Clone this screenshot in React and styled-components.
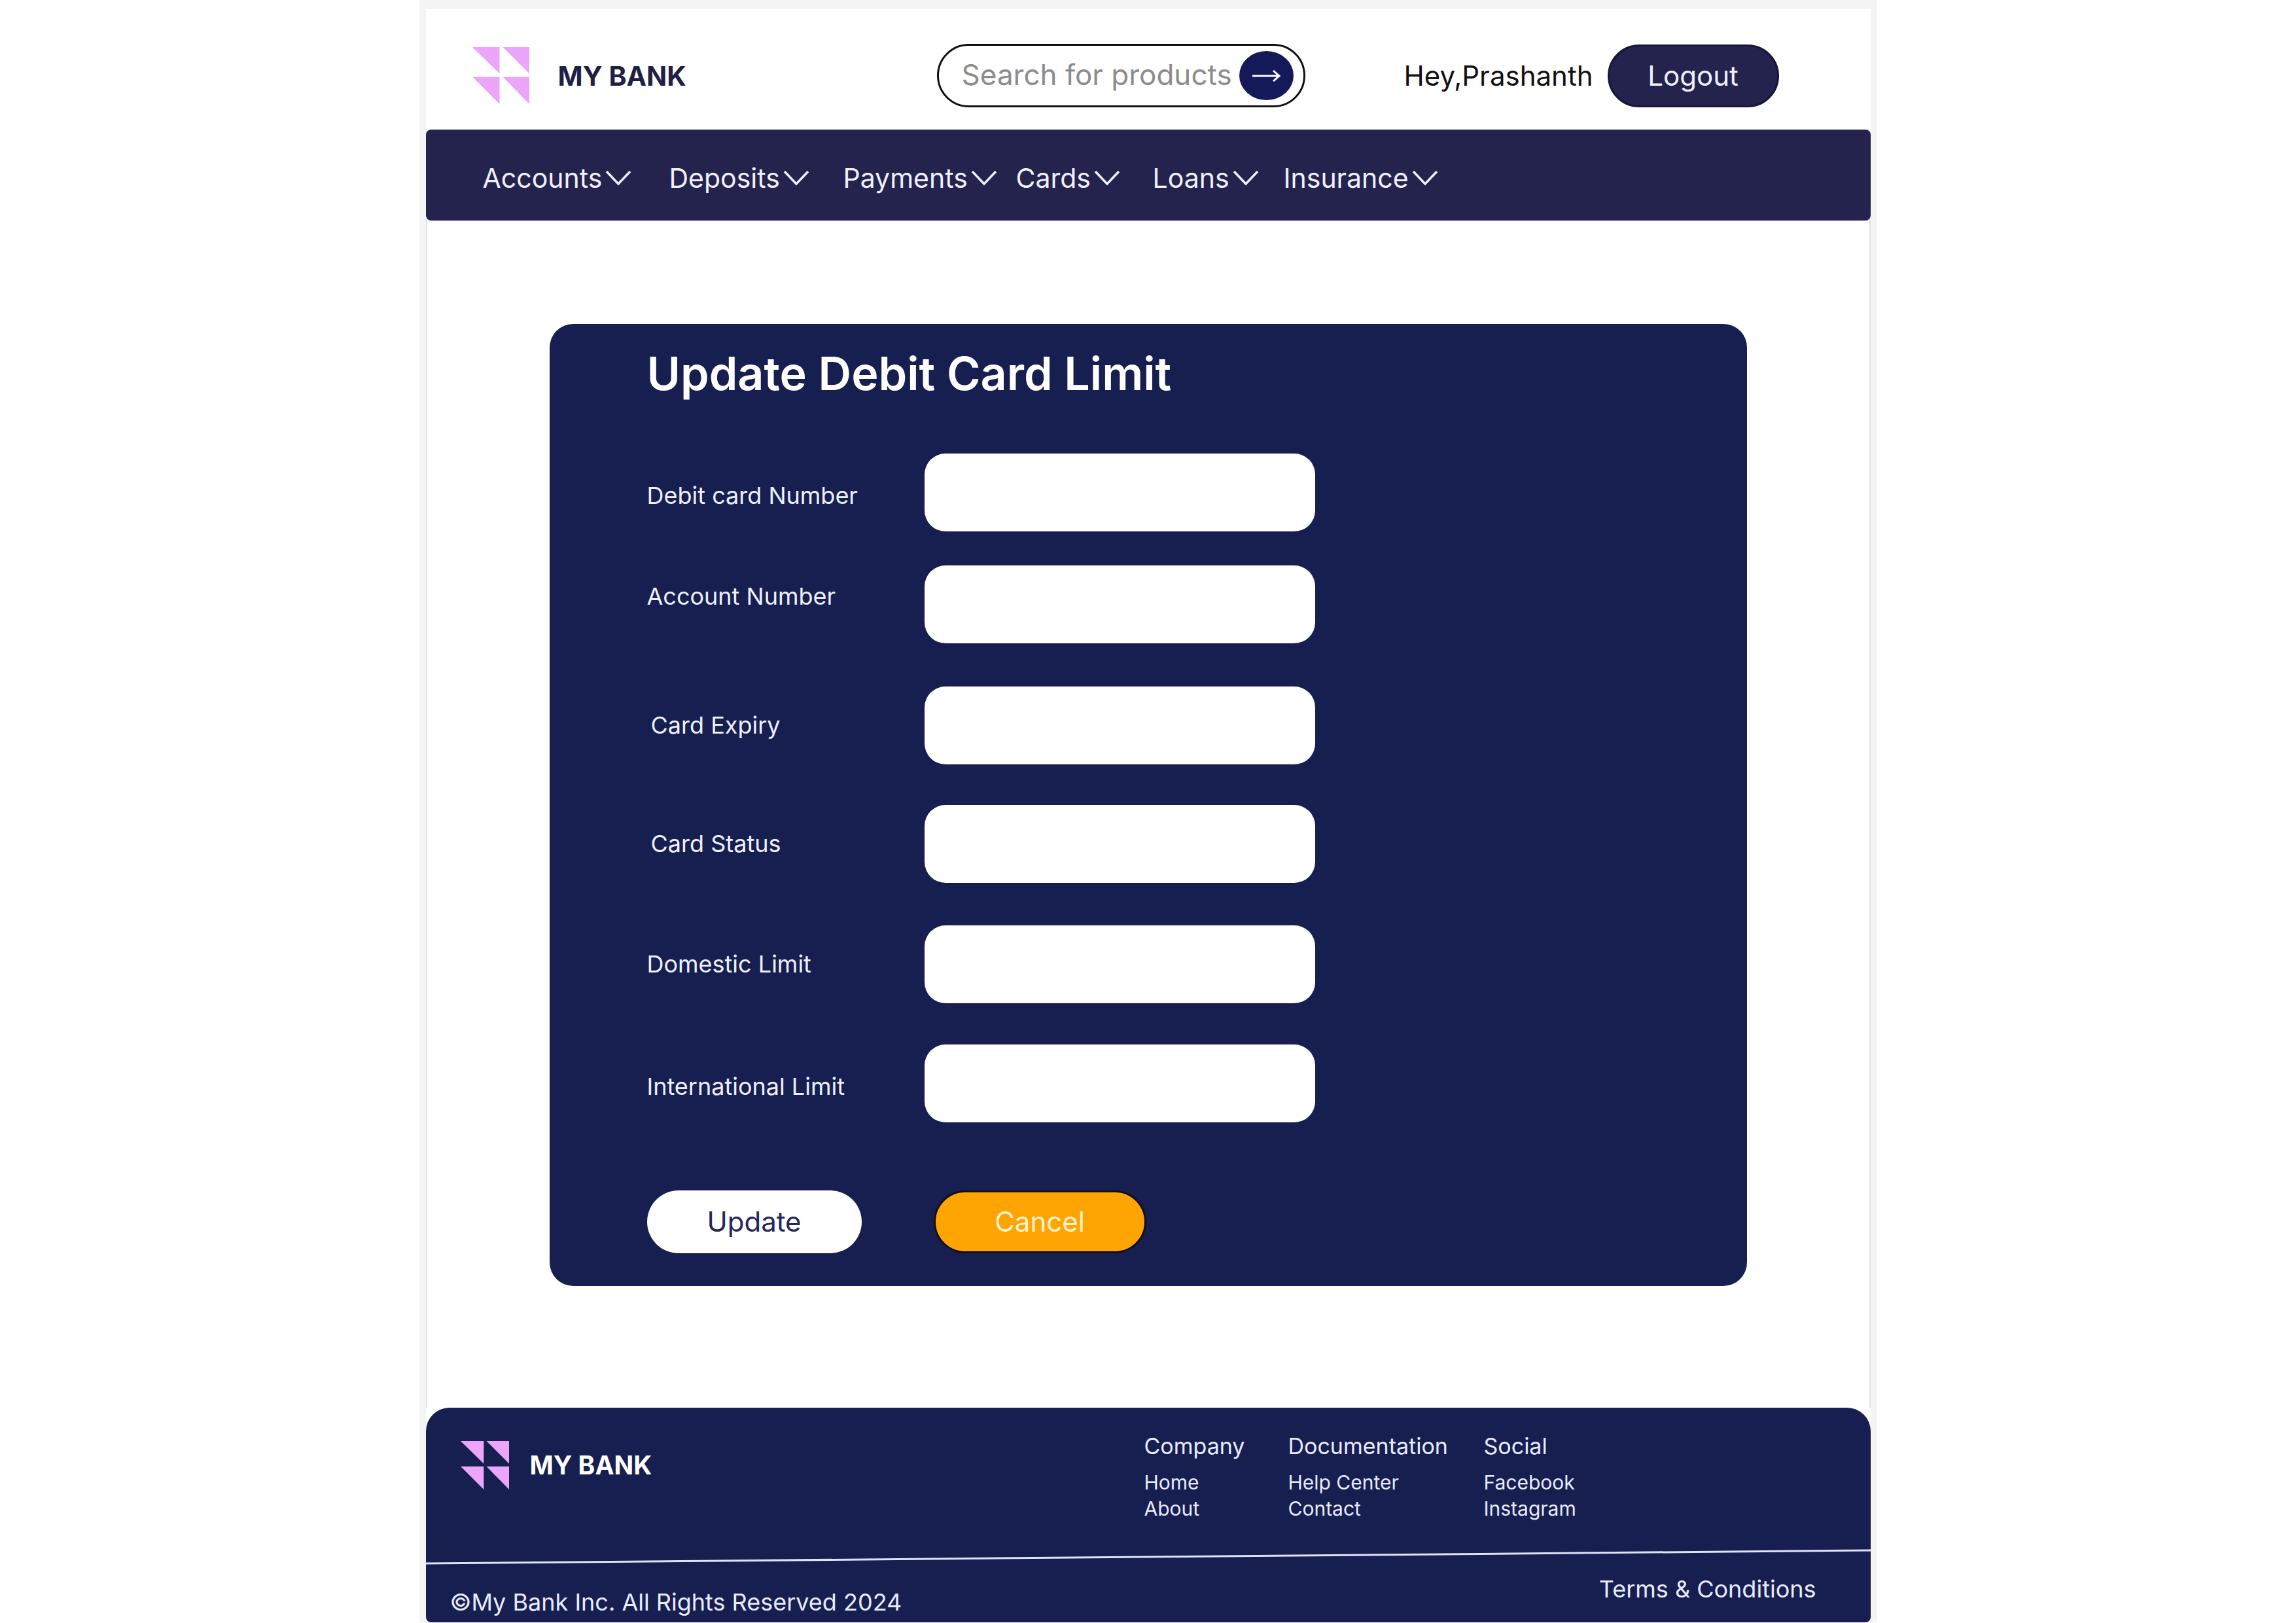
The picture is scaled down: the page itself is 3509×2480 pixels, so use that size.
import React from "react";
import styled, { createGlobalStyle } from "styled-components";

const navy = "#171f50";
const ink = "#24234d";
const pink = "#eba6fa";

const GlobalStyle = createGlobalStyle`
  *, *::before, *::after { box-sizing: border-box; }
  body {
    margin: 0;
    background: #fff;
    font-family: Inter, "Liberation Sans", sans-serif;
  }
  button, input { font-family: inherit; }
`;

const Frame = styled.div`
  width: min(100%, 2228px);
  margin: 0 auto;
  padding: 14px 10px 0;
  background: #f4f4f4;
`;

const Header = styled.header`
  display: grid;
  grid-template-columns: 1fr auto auto;
  align-items: center;
  column-gap: 151px;
  padding: 53px 140px 34px 71px;
  background: #fff;
`;

const Brand = styled.a`
  display: flex;
  align-items: center;
  gap: ${(p) => (p.$small ? 32 : 44)}px;
  color: ${(p) => (p.$small ? "#fff" : "#211f45")};
  font-size: ${(p) => (p.$small ? 39 : 41)}px;
  line-height: 56px;
  font-weight: 700;
  text-decoration: none;
  white-space: nowrap;
`;

const LogoMark = styled.svg`
  display: block;
  width: ${(p) => p.$size}px;
  height: ${(p) => p.$size}px;
  fill: ${pink};
`;

const SearchBox = styled.form`
  display: flex;
  align-items: center;
  width: 563px;
  height: 97px;
  padding: 0 15px 0 35px;
  border: 3px solid #111;
  border-radius: 49px;
  background: #fff;
`;

const SearchInput = styled.input`
  flex: 1;
  min-width: 0;
  padding: 0 0 4px;
  border: 0;
  outline: 0;
  background: transparent;
  font-size: 44px;
  line-height: 56px;
  color: #333;
  &::placeholder { color: #8c8c8c; opacity: 1; }
`;

const SearchButton = styled.button`
  display: grid;
  place-items: center;
  width: 83px;
  height: 75px;
  padding: 0;
  border: 0;
  border-radius: 50%;
  background: #14195a;
`;

const Account = styled.div`
  display: flex;
  align-items: center;
  gap: 22px;
  font-size: 42px;
  line-height: 56px;
  color: #111;
  white-space: nowrap;
`;

const PillButton = styled.button`
  width: ${(p) => p.$width}px;
  height: 96px;
  padding: 0;
  border: ${(p) => p.$border || "0"};
  border-radius: 48px;
  background: ${(p) => p.$bg};
  color: ${(p) => p.$color};
  font-size: 42px;
  line-height: 56px;
`;

const NavBar = styled.nav`
  display: grid;
  grid-template-columns: 285px 266px 264px 209px 200px auto;
  justify-content: start;
  align-items: center;
  height: 139px;
  padding: 8px 87px 0;
  border-radius: 8px;
  background: ${ink};
`;

const NavButton = styled.button`
  display: flex;
  align-items: center;
  gap: 5px;
  padding: 0;
  border: 0;
  background: none;
  color: #f1f0ff;
  font-size: 41px;
  line-height: 56px;
  white-space: nowrap;
`;

const Main = styled.main`
  padding: 158px 187px 186px;
  border: solid #e2e2e6;
  border-width: 0 2px;
  background: #fff;
`;

const Card = styled.form`
  padding: 32px 149px 50px;
  border-radius: 36px;
  background: ${navy};
`;

const Title = styled.h1`
  margin: 0 0 78px;
  color: #fff;
  font-size: 70px;
  line-height: 88px;
  font-weight: 600;
`;

const Fields = styled.div`
  display: grid;
  grid-template-rows: 171px 185px 181px 184px 182px 119px;
`;

const Field = styled.div`
  display: grid;
  grid-template-columns: 424px minmax(0, 597px);
  align-items: ${(p) => p.$align || "center"};
  height: 119px;
`;

const Label = styled.label`
  padding-top: ${(p) => (p.$low ? 10 : 0)}px;
  padding-left: ${(p) => (p.$indent ? 6 : 0)}px;
  color: #eef0ff;
  font-size: 36px;
  line-height: 95px;
  white-space: nowrap;
`;

const TextBox = styled.input`
  width: 100%;
  height: 119px;
  padding: 0 32px;
  border: 0;
  border-radius: 32px;
  background: #fff;
  color: ${navy};
  font-size: 36px;
`;

const Actions = styled.div`
  display: flex;
  gap: 110px;
  margin-top: 104px;
`;

const Footer = styled.footer`
  border-radius: 36px 36px 8px 8px;
  background: ${navy};
  color: #e9ebff;
`;

/* White behind the rounded top corners of the footer. */
const FooterWrap = styled.div`
  background: linear-gradient(#fff 50%, #f4f4f4 50%);
`;

const FooterTop = styled.div`
  display: flex;
  justify-content: space-between;
  align-items: flex-start;
  height: 216px;
  padding: 35px 0 0 53px;
`;

const FooterBrand = styled.div`
  padding-top: 16px;
`;

const LinkColumns = styled.div`
  display: grid;
  grid-template-columns: 220px 299px 591px;
`;

const LinkHeading = styled.h2`
  margin: 0 0 11px;
  font-size: 34px;
  line-height: 48px;
  font-weight: 400;
`;

const LinkList = styled.ul`
  margin: 0;
  padding: 0;
  list-style: none;
  font-size: 30px;
  line-height: 40px;
`;

const FooterLink = styled.a`
  color: inherit;
  text-decoration: none;
  white-space: nowrap;
`;

const Rule = styled.svg`
  display: block;
  width: 100%;
  height: 24px;
`;

const FooterBottom = styled.div`
  display: flex;
  justify-content: space-between;
  height: 88px;
  padding: 0 83px 0 37px;
  font-size: 36px;
`;

const Copyright = styled.p`
  align-self: flex-end;
  margin: 0;
  line-height: 62px;
`;

const Terms = styled.div`
  line-height: 74px;
`;

function Logo({ size }) {
  return (
    <LogoMark $size={size} viewBox="0 0 88 88" aria-hidden="true">
      <path d="M0 0H42V41ZM47 0H88V41ZM0 46H42V88ZM47 46H88V88Z" />
    </LogoMark>
  );
}

function Chevron() {
  return (
    <svg width="40" height="26" viewBox="0 0 40 26" fill="none" stroke="#f1f0ff" strokeWidth="3.5" aria-hidden="true">
      <path d="M2 3L20 22L38 3" />
    </svg>
  );
}

function Arrow() {
  return (
    <svg width="46" height="24" viewBox="0 0 46 24" fill="none" stroke="#fff" strokeWidth="3" aria-hidden="true">
      <path d="M2 12H43M34 4L43 12L34 20" />
    </svg>
  );
}

const menus = ["Accounts", "Deposits", "Payments", "Cards", "Loans", "Insurance"];

const fields = [
  { id: "debit", label: "Debit card Number", low: true },
  { id: "account", label: "Account Number", align: "start" },
  { id: "expiry", label: "Card Expiry", indent: true },
  { id: "status", label: "Card Status", indent: true },
  { id: "domestic", label: "Domestic Limit" },
  { id: "international", label: "International Limit", low: true },
];

const columns = [
  { title: "Company", links: ["Home", "About"] },
  { title: "Documentation", links: ["Help Center", "Contact"] },
  { title: "Social", links: ["Facebook", "Instagram"] },
];

export default function App() {
  return (
    <>
      <GlobalStyle />
      <Frame>
        <Header>
          <Brand href="#">
            <Logo size={87} />
            MY BANK
          </Brand>
          <SearchBox onSubmit={(e) => e.preventDefault()}>
            <SearchInput type="text" placeholder="Search for products" aria-label="Search for products" />
            <SearchButton type="submit" aria-label="Search">
              <Arrow />
            </SearchButton>
          </SearchBox>
          <Account>
            <span>Hey,Prashanth</span>
            <PillButton type="button" $width={262} $bg={ink} $color="#f1f0ff" $border="3px solid #17163a">
              Logout
            </PillButton>
          </Account>
        </Header>
        <NavBar>
          {menus.map((name) => (
            <NavButton key={name} type="button">
              {name}
              <Chevron />
            </NavButton>
          ))}
        </NavBar>
        <Main>
          <Card onSubmit={(e) => e.preventDefault()}>
            <Title>Update Debit Card Limit</Title>
            <Fields>
              {fields.map((f) => (
                <Field key={f.id} $align={f.align}>
                  <Label htmlFor={f.id} $indent={f.indent} $low={f.low}>{f.label}</Label>
                  <TextBox id={f.id} type="text" />
                </Field>
              ))}
            </Fields>
            <Actions>
              <PillButton type="submit" $width={328} $bg="#fff" $color="#25265a">Update</PillButton>
              <PillButton type="button" $width={325} $bg="#ffa503" $color="#fff3d0" $border="3px solid #150d1c">
                Cancel
              </PillButton>
            </Actions>
          </Card>
        </Main>
        <FooterWrap>
          <Footer>
            <FooterTop>
              <FooterBrand>
                <Brand href="#" $small>
                  <Logo size={74} />
                  MY BANK
                </Brand>
              </FooterBrand>
              <LinkColumns>
                {columns.map((c) => (
                  <div key={c.title}>
                    <LinkHeading>{c.title}</LinkHeading>
                    <LinkList>
                      {c.links.map((l) => (
                        <li key={l}>
                          <FooterLink href="#">{l}</FooterLink>
                        </li>
                      ))}
                    </LinkList>
                  </div>
                ))}
              </LinkColumns>
            </FooterTop>
            <Rule viewBox="0 0 2208 24" preserveAspectRatio="none" aria-hidden="true">
              <line x1="0" y1="22" x2="2208" y2="2" stroke="#dfe2fb" strokeWidth="3" />
            </Rule>
            <FooterBottom>
              <Copyright>©My Bank Inc. All Rights Reserved 2024</Copyright>
              <Terms>
                <FooterLink href="#">Terms &amp; Conditions</FooterLink>
              </Terms>
            </FooterBottom>
          </Footer>
        </FooterWrap>
      </Frame>
    </>
  );
}
